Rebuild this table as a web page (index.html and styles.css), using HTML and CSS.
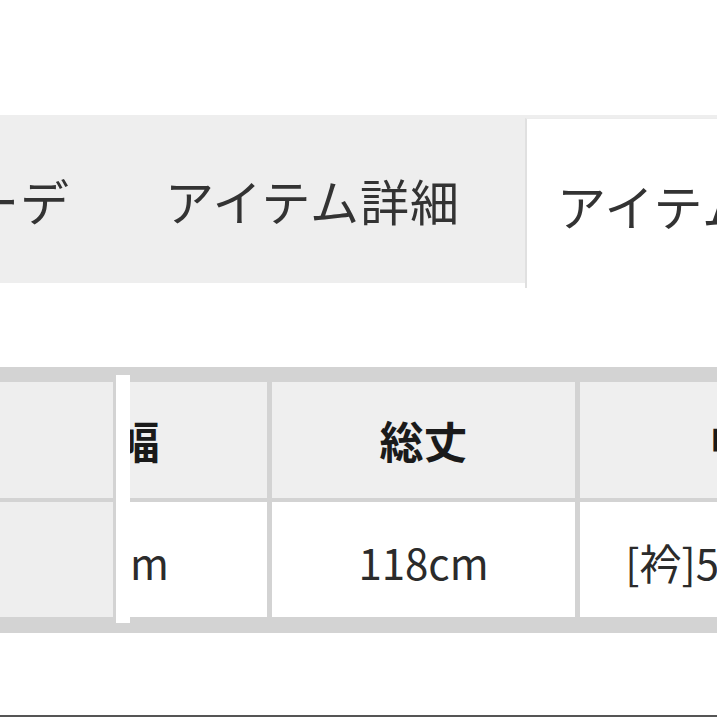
FILE: index.html
```html
<!DOCTYPE html>
<html lang="ja">
<head>
<meta charset="utf-8">
<link rel="stylesheet" href="styles.css">
</head>
<body>
<div class="page">
  <nav class="tabs">
    <div class="tab tab-first">コーデ</div>
    <div class="tab tab-second">アイテム詳細</div>
    <div class="tab tab-active">アイテムサイズ</div>
  </nav>

  <section class="size-table">
    <div class="size-grid">
      <div class="cell head">身幅</div>
      <div class="cell head">総丈</div>
      <div class="cell head">中</div>
      <div class="cell body">62cm</div>
      <div class="cell body">118cm</div>
      <div class="cell body">[衿]56.5cm</div>
    </div>
    <div class="sticky">
      <div class="sticky-cells">
        <div class="sticky-cell"></div>
        <div class="sticky-cell"></div>
      </div>
      <div class="sticky-edge"></div>
    </div>
  </section>

  <div class="bottom-bar"></div>
</div>
</body>
</html>
```

FILE: styles.css
```css
html, body {
  margin: 0;
  padding: 0;
  background: #ffffff;
}

body {
  width: 717px;
  height: 717px;
  overflow: hidden;
  font-family: "Noto Sans CJK JP", "Noto Sans", sans-serif;
}

.page {
  display: flex;
  flex-direction: column;
  height: 717px;
}

.tabs {
  margin-top: 115px;
  height: 168px;
  background: #eeeeee;
  display: flex;
  align-items: stretch;
  flex-shrink: 0;
  white-space: nowrap;
}

.tab {
  display: flex;
  align-items: center;
  font-size: 49px;
  letter-spacing: 1px;
  line-height: 1;
  color: #333333;
  flex-shrink: 0;
  box-sizing: border-box;
}

.tab-first {
  width: 245px;
  margin-left: -80px;
}

.tab-second {
  width: 360px;
}

.tab-active {
  margin-top: 3px;
  margin-bottom: -5px;
  padding-left: 30px;
  padding-top: 1px;
  padding-right: 40px;
  background: #ffffff;
  border-left: 2px solid #e0e0e0;
  border-top: 1px solid #ececec;
}

.size-table {
  position: relative;
  margin-top: 84px;
  height: 235px;
  padding: 15px 0 16px;
  background: #d3d3d3;
  overflow: hidden;
  flex-shrink: 0;
}

.size-grid {
  display: grid;
  grid-template-columns: repeat(3, 303px);
  grid-template-rows: 116px 115px;
  column-gap: 5px;
  row-gap: 4px;
  margin-left: -36px;
  width: 919px;
}

.cell {
  display: flex;
  align-items: center;
  justify-content: center;
  line-height: 1;
  white-space: nowrap;
}

.head {
  background: #efefef;
  color: #1a1a1a;
  font-weight: 700;
  font-size: 44px;
}

.body {
  background: #ffffff;
  color: #2b2b2b;
  font-size: 42px;
  padding-top: 4px;
}

.sticky {
  position: absolute;
  left: 0;
  top: 0;
  bottom: 0;
  display: flex;
}

.sticky-cells {
  width: 113px;
  padding: 15px 3px 16px 0;
  background: #d3d3d3;
  display: grid;
  grid-template-rows: 116px 115px;
  row-gap: 4px;
}

.sticky-cell {
  background: #eeeeee;
}

.sticky-edge {
  width: 14px;
  background: #ffffff;
  margin: 8px 0 10px;
}

.bottom-bar {
  margin-top: auto;
  height: 2px;
  background: #555555;
  flex-shrink: 0;
}
```
